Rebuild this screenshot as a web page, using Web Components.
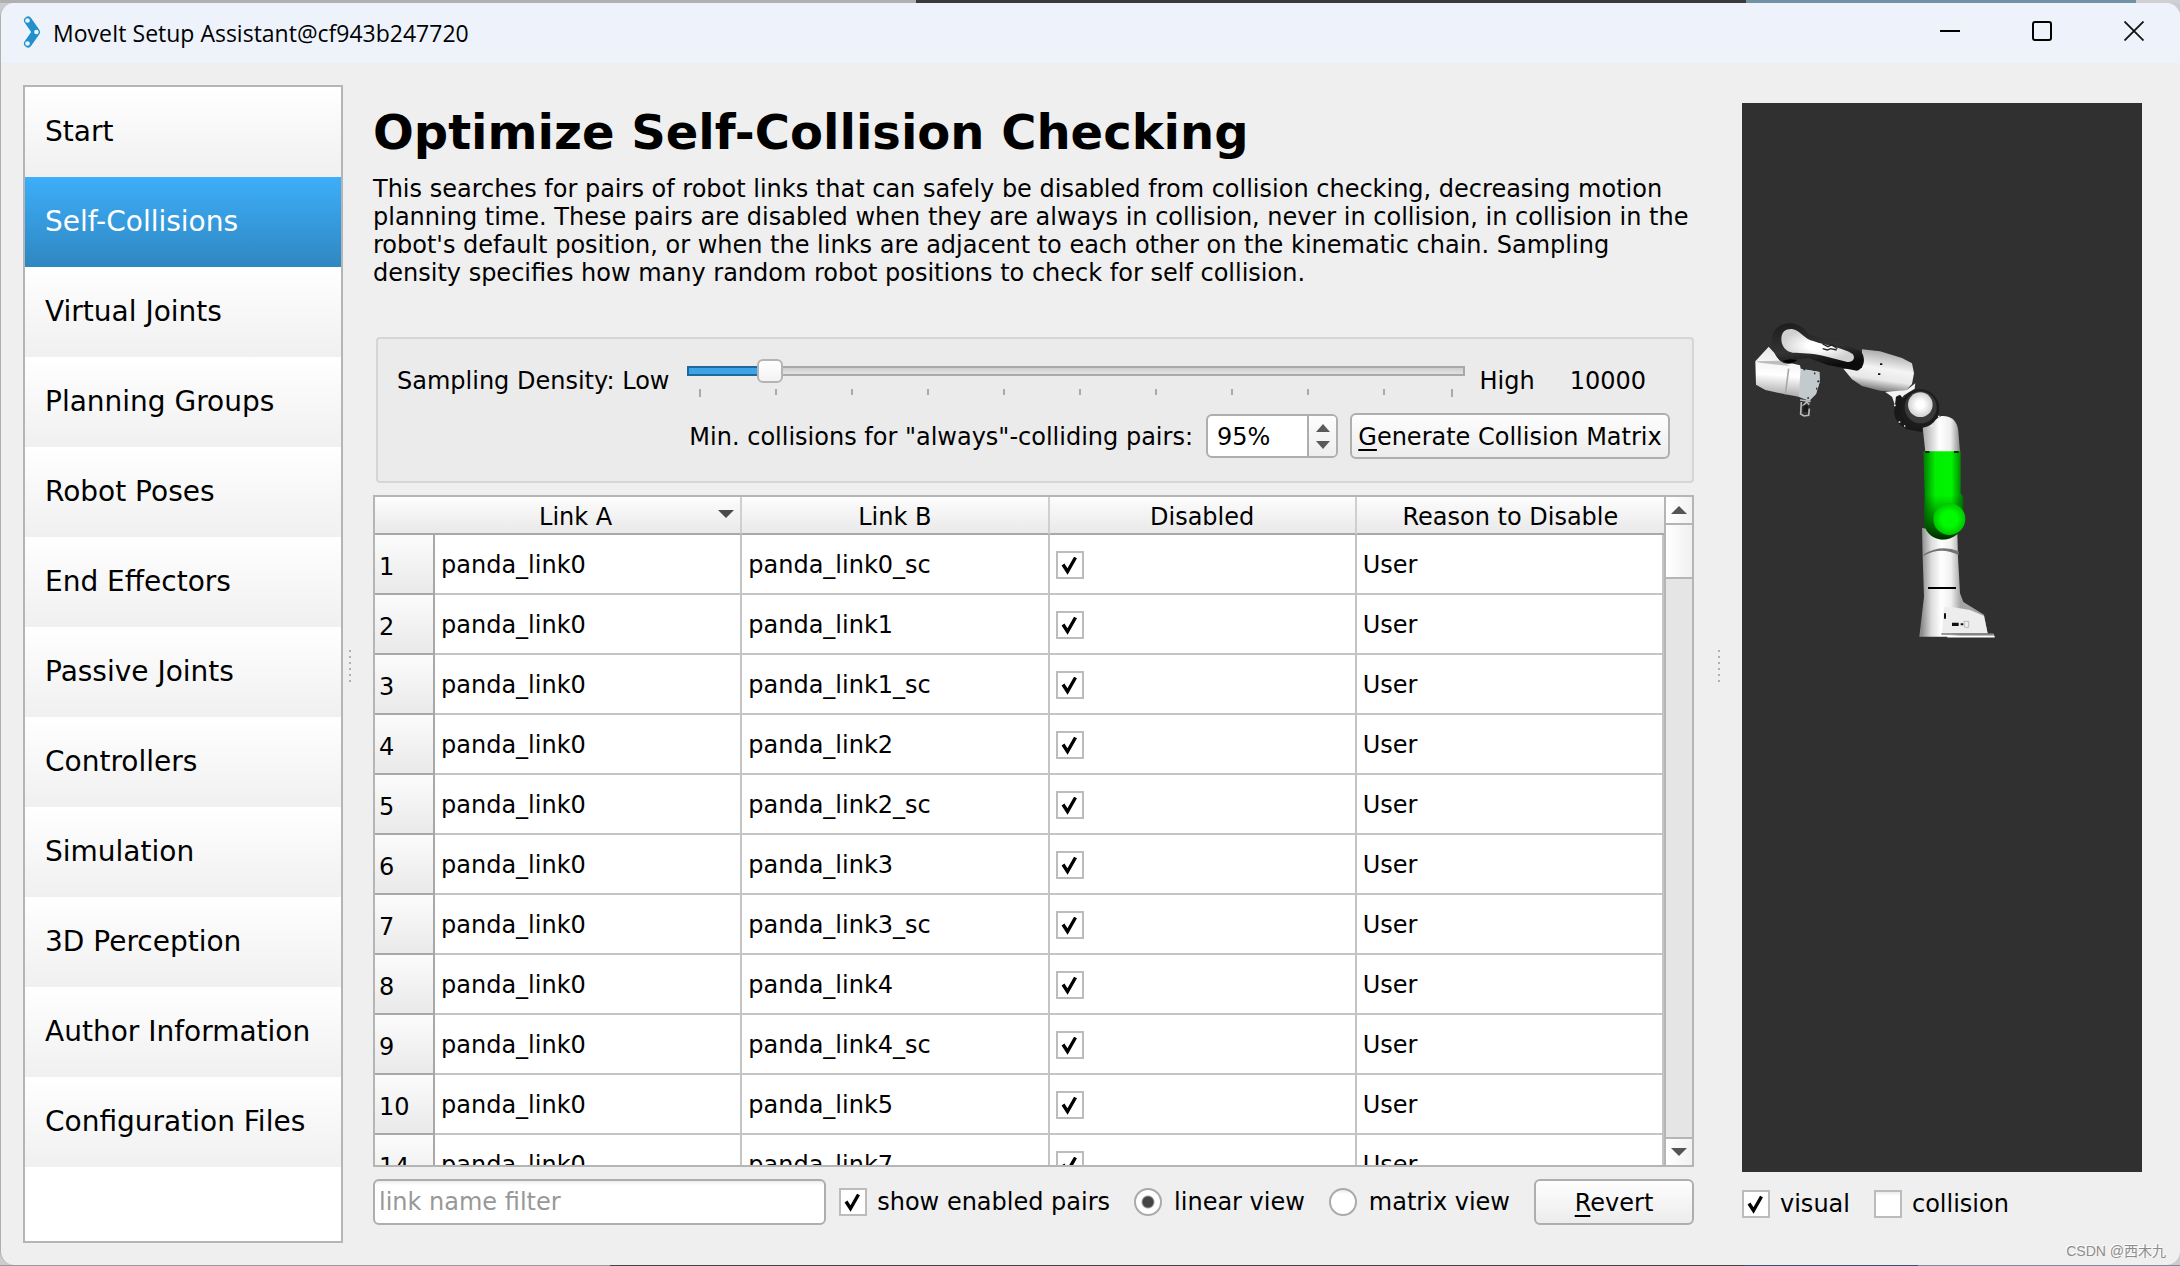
<!DOCTYPE html>
<html lang="en">
<head>
<meta charset="utf-8">
<title>MoveIt Setup Assistant</title>
<style>
html, body { height: 100%; margin: 0; }
body {
  box-sizing: border-box;
  padding: 3px 0 1px 0;
  font: 24px/28px "DejaVu Sans", sans-serif;
  color: #000;
  background:
    linear-gradient(90deg, #b0b0b0 42%, #3a3a3a 42%, #3a3a3a 80.1%, #7192a5 80.1%, #7192a5 98%, #d0d0d0 98%) 0 0 / 100% 3px no-repeat,
    linear-gradient(90deg, #999 28%, #444 28%, #444 80%, #3b4f78 80%, #3b4f78 88%, #7d8a99 88%) 0 100% / 100% 1px no-repeat,
    #c9ccd0;
  overflow: hidden;
}
</style>
</head>
<body>
<app-window heading="MoveIt Setup Assistant@cf943b247720">
  <step-list slot="nav"></step-list>
  <split-handle slot="split-a"></split-handle>
  <collision-page slot="page"></collision-page>
  <split-handle slot="split-b" class="wide"></split-handle>
  <robot-view slot="view"></robot-view>
</app-window>

<script>
const define = (name, markup, setup) => {
  const tpl = document.createElement('template');
  tpl.innerHTML = markup;
  customElements.define(name, class extends HTMLElement {
    constructor() {
      super();
      this.attachShadow({ mode: 'open' }).append(tpl.content.cloneNode(true));
    }
    connectedCallback() { if (setup) setup(this, this.shadowRoot); }
  });
};

define('app-window', `
<style>
  :host { display: flex; flex-direction: column; box-sizing: border-box; height: 100%; position: relative;
    border: 1px solid #b0b0b0; border-width: 0 0 0 1px; border-radius: 14px; background: #efefef; overflow: hidden; }
  header { display: flex; align-items: center; height: 60px; flex: none; background: #eef3fb; padding: 0 0 0 22px; }
  .logo { width: 18px; height: 32px; flex: none; margin: -2px 12px 0 0; }
  h1 { margin: 0; flex: 1; font: 23px/32px "Open Sans", "Noto Sans", sans-serif; }
  .ctl { display: flex; padding-bottom: 4px; }
  button { width: 92px; height: 56px; padding: 0; border: 0; background: none; display: grid; place-items: center; }
  button svg { width: 20px; height: 20px; }
  main { flex: 1; min-height: 0; display: flex; padding: 22px 38px 22px 22px; }
  ::slotted([slot=page]) { flex: 1; min-width: 0; }
  .mark { position: absolute; right: 14px; bottom: 2px; font: 14px/24px "Liberation Sans", "Noto Sans CJK SC", sans-serif; color: #8c8c8c; text-shadow: -1px -1px 0 #fff; }
</style>
<header>
  <svg class="logo" viewBox="0 0 18 32">
    <path d="M5 4.500 13 16 5 27.500" fill="none" stroke="#2191cd" stroke-width="8" stroke-linecap="round" stroke-linejoin="round"/>
    <circle cx="4.500" cy="4.500" r="2.300" fill="#eef6fc"/><circle cx="13.400" cy="16" r="2.300" fill="#eef6fc"/><circle cx="4.500" cy="27.500" r="2.300" fill="#eef6fc"/>
  </svg>
  <h1></h1>
  <div class="ctl">
    <button aria-label="Minimize"><svg viewBox="0 0 20 20"><path d="M0 10H20" stroke="#000" stroke-width="2"/></svg></button>
    <button aria-label="Maximize"><svg viewBox="0 0 20 20"><rect x="1" y="1" width="18" height="18" rx="2" fill="none" stroke="#000" stroke-width="2"/></svg></button>
    <button aria-label="Close"><svg viewBox="0 0 20 20"><path d="M.5.5 19.500 19.500M19.500.5.5 19.500" stroke="#111" stroke-width="1.800"/></svg></button>
  </div>
</header>
<main><slot name="nav"></slot><slot name="split-a"></slot><slot name="page"></slot><slot name="split-b"></slot><slot name="view"></slot></main>
<div class="mark">CSDN @西木九</div>`,
(el, root) => { root.querySelector('h1').textContent = el.getAttribute('heading'); });

define('step-list', `
<style>
  :host { display: block; flex: none; box-sizing: border-box; width: 320px; border: 2px solid #b5b5b5; background: #fff; }
  ul { list-style: none; margin: 0; padding: 0; }
  a { display: flex; align-items: center; height: 90px; box-sizing: border-box; padding: 0 20px; font-size: 28px; line-height: 32px;
    color: #000; text-decoration: none; background: linear-gradient(#fff, #f0f0f0); }
  a[aria-current] { color: #fff; background: linear-gradient(#3daefa, #2f87c1); }
</style>
<nav><ul></ul></nav>`,
(el, root) => {
  const names = ['Start', 'Self-Collisions', 'Virtual Joints', 'Planning Groups', 'Robot Poses', 'End Effectors',
    'Passive Joints', 'Controllers', 'Simulation', '3D Perception', 'Author Information', 'Configuration Files'];
  root.querySelector('ul').innerHTML = names.map((n, i) =>
    `<li><a href="#"${i === 1 ? ' aria-current="page"' : ''}>${n}</a></li>`).join('');
});

define('split-handle', `
<style>
  :host { display: flex; flex: none; align-items: center; width: 30px; box-sizing: border-box; padding: 6px 0 0 6px; }
  :host(.wide) { width: 48px; padding-left: 24px; }
  i { display: block; width: 2px; height: 34px; background: repeating-linear-gradient(#b0b0b0 0 2px, transparent 2px 6px); }
</style><i></i>`);

const checkStyle = `
  input[type=checkbox], input[type=radio] { appearance: none; display: block; flex: none; box-sizing: border-box; width: 28px; height: 28px; margin: 0;
    border: 2px solid #bcbcbc; background: #fff linear-gradient(#ececec, #fff) 0 0 / 100% 4px no-repeat; }
  input[type=checkbox]:checked { background: #fff url("data:image/svg+xml,%3Csvg xmlns='http://www.w3.org/2000/svg' viewBox='0 0 24 24'%3E%3Cpath d='M5 11.500 9.500 18.500 17.500 4.500' fill='none' stroke='%23000' stroke-width='3.400'/%3E%3C/svg%3E") center / 24px 24px no-repeat; }
  input[type=radio] { border-radius: 50%; border-color: #aaa; }
  input[type=radio]:checked { background: radial-gradient(circle, #444 5px, #fff 7px); }
`;

define('check-option', `
<style>
  :host { display: inline-flex; }
  label { display: flex; align-items: center; gap: 10px; white-space: nowrap; }
  :host([type=radio]) label { gap: 12px; }
  ${checkStyle}
</style>
<label><input><slot></slot></label>`,
(el, root) => {
  const input = root.querySelector('input');
  input.type = el.getAttribute('type') || 'checkbox';
  input.checked = el.hasAttribute('checked');
});

define('push-button', `
<style>
  :host { display: block; }
  button { box-sizing: border-box; width: 100%; height: 46px; padding: 2px 6px 0; font: inherit; color: #000; white-space: nowrap;
    border: 2px solid #aeaeae; border-radius: 6px; background: linear-gradient(#fefefe, #ececec); }
</style>
<button><slot></slot></button>`);

define('density-slider', `
<style>
  :host { display: block; flex: 1; }
  input { appearance: none; display: block; width: 100%; height: 24px; margin: 0; background: none; }
  input::-webkit-slider-runnable-track { height: 10px; box-sizing: border-box; border: 2px solid #a9a9a9; border-radius: 3px;
    background: linear-gradient(90deg, #3ea3e6 9%, transparent 9%), linear-gradient(#cfcfcf, #e2e2e2);
    border-image: linear-gradient(90deg, #1f6a9c 9%, #a9a9a9 9%) 2; }
  input::-webkit-slider-thumb { appearance: none; box-sizing: border-box; width: 26px; height: 24px; margin-top: -9px;
    border: 2px solid #b4b4b4; border-radius: 6px; background: linear-gradient(#fff, #f3f3f3); }
  .ticks { display: flex; align-items: flex-start; padding: 6px 12px 0; }
  .ticks i { flex: 76 1 0; box-sizing: border-box; height: 6px; border-left: 2px solid #aaa; }
  .ticks i:first-child, .ticks i:last-child { height: 8px; }
  .ticks i:nth-child(10) { flex-grow: 68; }
  .ticks i:last-child { flex: none; }
</style>
<input type="range" min="0" max="100" value="9" aria-label="Sampling density">
<div class="ticks"><i></i><i></i><i></i><i></i><i></i><i></i><i></i><i></i><i></i><i></i><i></i></div>`);

define('spin-box', `
<style>
  :host { display: flex; box-sizing: border-box; width: 132px; height: 44px; border: 2px solid #aeaeae; border-radius: 6px; background: #fff; overflow: hidden; }
  input { flex: 1; min-width: 0; box-sizing: border-box; border: 0; padding: 2px 0 0 9px; font: inherit; background: none; outline: 0; }
  div { display: flex; flex-direction: column; justify-content: center; gap: 8px; width: 27px; border-left: 2px solid #aeaeae; background: linear-gradient(#fdfdfd, #eee); }
  button { display: grid; place-items: center; border: 0; padding: 0; background: none; height: 9px; }
  svg { width: 14px; height: 8px; display: block; }
</style>
<input type="text" value="95%" aria-label="Minimum collisions">
<div><button aria-label="Increase"><svg viewBox="0 0 14 8"><path d="M0 8 7 0 14 8z" fill="#5a5a5a"/></svg></button>
<button aria-label="Decrease"><svg viewBox="0 0 14 8"><path d="M0 0 7 8 14 0z" fill="#5a5a5a"/></svg></button></div>`);

define('link-table', `
<style>
  :host { display: flex; flex: 1; min-height: 0; border: 2px solid #b5b5b5; background: #fff; overflow: hidden; }
  .body { flex: 1; min-width: 0; overflow: hidden; }
  table { width: 100%; table-layout: fixed; border-collapse: separate; border-spacing: 0; }
  th, td { box-sizing: border-box; padding: 2px 0 0 6px; font-weight: normal; text-align: left; border: 0 solid #c4c4c4; white-space: nowrap; }
  thead th { height: 38px; text-align: center; padding: 4px 0 0; border-bottom: 2px solid #a8a8a8; border-right: 2px solid #cfcfcf; background: linear-gradient(#fdfdfd, #e9e9e9); }
  thead th:first-child { width: 60px; border-right: 0; }
  thead th:last-child { border-right: 0; }
  .sort { display: flex; align-items: center; justify-content: flex-end; gap: 106px; padding-right: 6px; }
  .sort svg { width: 16px; height: 8px; margin-top: -6px; }
  tbody th { height: 60px; padding: 6px 0 0 4px; border-bottom: 2px solid #a8a8a8; border-right: 2px solid #a8a8a8; background: linear-gradient(#fcfcfc, #e9e9e9); }
  td { height: 60px; border-width: 0 2px 2px 0; }
  .bar { flex: none; width: 28px; box-sizing: border-box; border-left: 2px solid #b5b5b5; display: flex; flex-direction: column; background: #e5e5e5; }
  .bar button { display: grid; place-items: center; height: 28px; padding: 0; border: 0; background: linear-gradient(90deg, #fff, #f2f2f2); }
  .bar button:first-child { border-bottom: 2px solid #b5b5b5; }
  .bar button:last-child { border-top: 2px solid #b5b5b5; }
  .bar svg { width: 16px; height: 8px; }
  .track { flex: 1; }
  .thumb { height: 52px; border-bottom: 2px solid #b5b5b5; background: linear-gradient(90deg, #fff, #f0f0f0); }
  ${checkStyle}
</style>
<div class="body"><table>
  <thead><tr><th></th><th><span class="sort">Link A<svg viewBox="0 0 16 8"><path d="M0 0H16L8 8z" fill="#4a4a4a"/></svg></span></th><th>Link B</th><th>Disabled</th><th>Reason to Disable</th></tr></thead>
  <tbody></tbody>
</table></div>
<div class="bar">
  <button aria-label="Scroll up"><svg viewBox="0 0 16 8"><path d="M0 8 8 0 16 8z" fill="#555"/></svg></button>
  <div class="track"><div class="thumb"></div></div>
  <button aria-label="Scroll down"><svg viewBox="0 0 16 8"><path d="M0 0 8 8 16 0z" fill="#555"/></svg></button>
</div>`,
(el, root) => {
  const rows = [[1, '0_sc'], [2, '1'], [3, '1_sc'], [4, '2'], [5, '2_sc'], [6, '3'], [7, '3_sc'], [8, '4'], [9, '4_sc'], [10, '5'], [14, '7']];
  root.querySelector('tbody').innerHTML = rows.map(([n, b]) =>
    `<tr><th scope="row">${n}</th><td>panda_link0</td><td>panda_link${b}</td><td><input type="checkbox" checked aria-label="Disable pair ${n}"></td><td>User</td></tr>`).join('');
});

define('collision-page', `
<style>
  :host { display: flex; flex-direction: column; box-sizing: border-box; padding: 19px 0 18px; }
  h2 { margin: 0 0 15px; font-size: 48px; line-height: 56px; }
  p { margin: 0 0 50px; }
  u { text-decoration-thickness: 2px; text-underline-offset: 4px; }
  fieldset { margin: 0 0 12px 3px; min-width: 0; padding: 20px 22px 21px 19px; border: 2px solid #d6d6d6; border-radius: 4px; background: #ebebeb; }
  .row { display: flex; align-items: center; }
  .row > span { padding-top: 2px; }
  .first { height: 42px; margin-bottom: 11px; }
  .first density-slider { align-self: flex-start; margin: 0 14px 0 18px; }
  .value { margin: 0 24px 0 35px; }
  .second { justify-content: flex-end; height: 48px; }
  .second spin-box { margin: 0 12px 0 13px; }
  .second push-button { width: 320px; }
  .foot { display: flex; align-items: center; margin-top: 12px; }
  .foot .filter { flex: 1; min-width: 0; box-sizing: border-box; height: 46px; margin-right: 13px; padding: 0 4px; font: inherit; border: 2px solid #aeaeae; border-radius: 6px; background: #fff linear-gradient(#ededed, #fff) 0 0 / 100% 4px no-repeat; }
  .filter::placeholder { color: #989898; opacity: 1; }
  .foot push-button { width: 160px; margin-left: 24px; }
  .foot .r { margin-left: 24px; }
</style>
<h2>Optimize Self-Collision Checking</h2>
<p>This searches for pairs of robot links that can safely be disabled from collision checking, decreasing motion planning time. These pairs are disabled when they are always in collision, never in collision, in collision in the robot's default position, or when the links are adjacent to each other on the kinematic chain. Sampling density specifies how many random robot positions to check for self collision.</p>
<fieldset>
  <div class="row first"><span>Sampling Density: Low</span><density-slider></density-slider><span>High</span><span class="value">10000</span></div>
  <div class="row second"><span>Min. collisions for "always"-colliding pairs:</span><spin-box></spin-box><push-button><u>G</u>enerate Collision Matrix</push-button></div>
</fieldset>
<link-table></link-table>
<div class="foot">
  <input class="filter" type="text" placeholder="link name filter" aria-label="link name filter">
  <check-option checked>show enabled pairs</check-option>
  <check-option class="r" type="radio" checked>linear view</check-option>
  <check-option class="r" type="radio">matrix view</check-option>
  <push-button><u>R</u>evert</push-button>
</div>`);

define('robot-view', `
<style>
  :host { display: flex; flex-direction: column; flex: none; box-sizing: border-box; width: 400px; padding: 18px 0 25px; }
  .scene { flex: 1; min-height: 0; background: #303030; overflow: hidden; }
  svg { display: block; width: 100%; height: auto; }
  .opts { display: flex; gap: 24px; margin-top: 18px; }
</style>
<div class="scene"><svg viewBox="0 0 400 1068" role="img" aria-label="Panda robot arm">
  <defs>
    <linearGradient id="v"><stop offset="0" stop-color="#a8a8a8"/><stop offset=".45" stop-color="#fff"/><stop offset=".75" stop-color="#eee"/><stop offset="1" stop-color="#8a8a8a"/></linearGradient>
    <linearGradient id="b" gradientUnits="userSpaceOnUse" x1="545" x2="662" y1="0" y2="0"><stop offset="0" stop-color="#8c8c8c"/><stop offset=".25" stop-color="#dcdcdc"/><stop offset=".5" stop-color="#fff"/><stop offset=".75" stop-color="#f0f0f0"/><stop offset="1" stop-color="#a4a4a4"/></linearGradient>
    <linearGradient id="g"><stop offset="0" stop-color="#007a00"/><stop offset=".3" stop-color="#00f000"/><stop offset=".7" stop-color="#00f400"/><stop offset="1" stop-color="#006e00"/></linearGradient>
    <linearGradient id="gs" x2="0" y2="1"><stop offset=".5" stop-color="#005000" stop-opacity="0"/><stop offset=".85" stop-color="#004400" stop-opacity=".8"/><stop offset="1" stop-color="#002800"/></linearGradient>
    <radialGradient id="gb"><stop offset=".5" stop-color="#00fa00"/><stop offset="1" stop-color="#00c400"/></radialGradient>
    <radialGradient id="w"><stop offset=".3" stop-color="#fff"/><stop offset="1" stop-color="#d0d0d0"/></radialGradient>
    <linearGradient id="t" x1=".65" y1="0" x2=".4" y2="1"><stop offset="0" stop-color="#a0a0a0"/><stop offset=".45" stop-color="#f4f4f4"/><stop offset=".7" stop-color="#e8e8e8"/><stop offset="1" stop-color="#606060"/></linearGradient>
    <linearGradient id="h" x1=".1" x2="0" y2="1"><stop offset="0" stop-color="#e8e8e8"/><stop offset=".5" stop-color="#fff"/><stop offset="1" stop-color="#8c8c8c"/></linearGradient>
    <linearGradient id="k" x2=".3" y2="1"><stop offset="0" stop-color="#1c1c1c"/><stop offset=".6" stop-color="#343434"/><stop offset="1" stop-color="#0c0c0c"/></linearGradient>
  </defs>
  <g transform="translate(-2 197) scale(.333333)">
    <path d="M46 184 86 140 104 160 120 182 180 196 182 206 238 216 239 246 228 282 208 302 176 290 136 283 76 270 48 254z" fill="url(#h)"/>
    <path d="M46 184 120 182 150 198 60 188z" fill="#bdbdbd"/>
    <path d="M146 206 136 283" stroke="#aaa" stroke-width="5"/>
    <path d="M182 206 238 216 239 246 228 282 208 302 176 290z" fill="#c3cace"/>
    <path d="M222 220h4M232 244h6M228 266h4M190 208h6M202 294h5" stroke="#222" stroke-width="5"/>
    <path d="M180 300 212 304M184 306 182 342 192 348 206 346 208 326M188 318 200 306 208 314" fill="none" stroke="#b8b8b8" stroke-width="5"/>
    <path d="M190 316h14v20h-14z" fill="#191919"/>
    <path d="M366 148 420 154 486 174 516 190 522 220 516 252 500 270 460 276 420 272 366 258 336 238 310 206 366 204z" fill="url(#t)"/>
    <path d="M436 276 500 270 526 250 524 266 492 286 466 318 456 290z" fill="#f4f4f4"/>
    <path d="M96 120C96 88 120 70 150 70C176 70 194 86 206 104L260 116 320 136 360 152C378 166 376 206 350 212L320 206 260 194 206 174 172 178C158 196 132 196 116 178C104 164 96 144 96 120z" fill="url(#k)"/>
    <path d="M128 182Q150 198 172 180L150 178z" fill="#000"/>
    <path d="M124 118C124 94 138 86 156 87C180 90 192 118 222 124C254 136 306 142 338 162C348 174 338 188 322 186L252 168C214 158 186 160 158 158C138 156 124 138 124 118z" fill="url(#w)"/>
    <path d="M248 132l16 8 12-6 16 12M248 146l14 4 10-4 18 4" fill="none" stroke="#222" stroke-width="4"/>
    <path d="M420 190h7v5h-7zM414 220h7v5h-7z" fill="#111"/>
    <path d="M468 290 480 284 560 380 544 396 500 388Q464 368 462 336z" fill="#191919"/>
    <path d="M548 382 604 348Q650 346 655 394L660 456H556z" fill="url(#v)"/>
    <circle cx="540" cy="326" r="58" fill="#1c1c1c"/>
    <circle cx="542" cy="322" r="48" fill="#393939"/>
    <circle cx="541" cy="314" r="37" fill="url(#w)"/>
    <path d="M462 316h5M476 366h5M492 378h4M572 378h6M594 350h5" stroke="#eee" stroke-width="5"/>
    <path d="M546 684 652 700 654 770 660 880 670 906 732 944 743 1002H762V1010H538L552 890 548 770z" fill="url(#b)"/>
    <path d="M550 768Q604 738 656 766V754Q604 732 552 762z" fill="#747474"/>
    <path d="M564 864H648" stroke="#000" stroke-width="6"/>
    <path d="M612 922H640L690 930 732 948 743 1000H606z" fill="#ededed"/>
    <path d="M604 1002H760" stroke="#777" stroke-width="4"/><path d="M622 1010H764" stroke="#fff" stroke-width="5"/>
    <path d="M612 940h6v16h-6zM636 968h20v10h-20zM662 970h8v6h-8z" fill="#111"/><path d="M672 964h14v18h-12z" fill="none" stroke="#bbb" stroke-width="3"/>
    <path d="M550 454H662V580L670 590V660C664 740 552 736 552 660L554 590z" fill="url(#g)"/>
    <path d="M550 454H662V580L670 590V660C664 740 552 736 552 660L554 590z" fill="url(#gs)"/>
    <path d="M556 456H568M642 456H656" stroke="#000" stroke-width="5"/>
    <circle cx="628" cy="657" r="48" fill="url(#gb)"/>
  </g>
</svg></div>
<div class="opts"><check-option checked>visual</check-option><check-option>collision</check-option></div>`);
</script>
</body>
</html>
